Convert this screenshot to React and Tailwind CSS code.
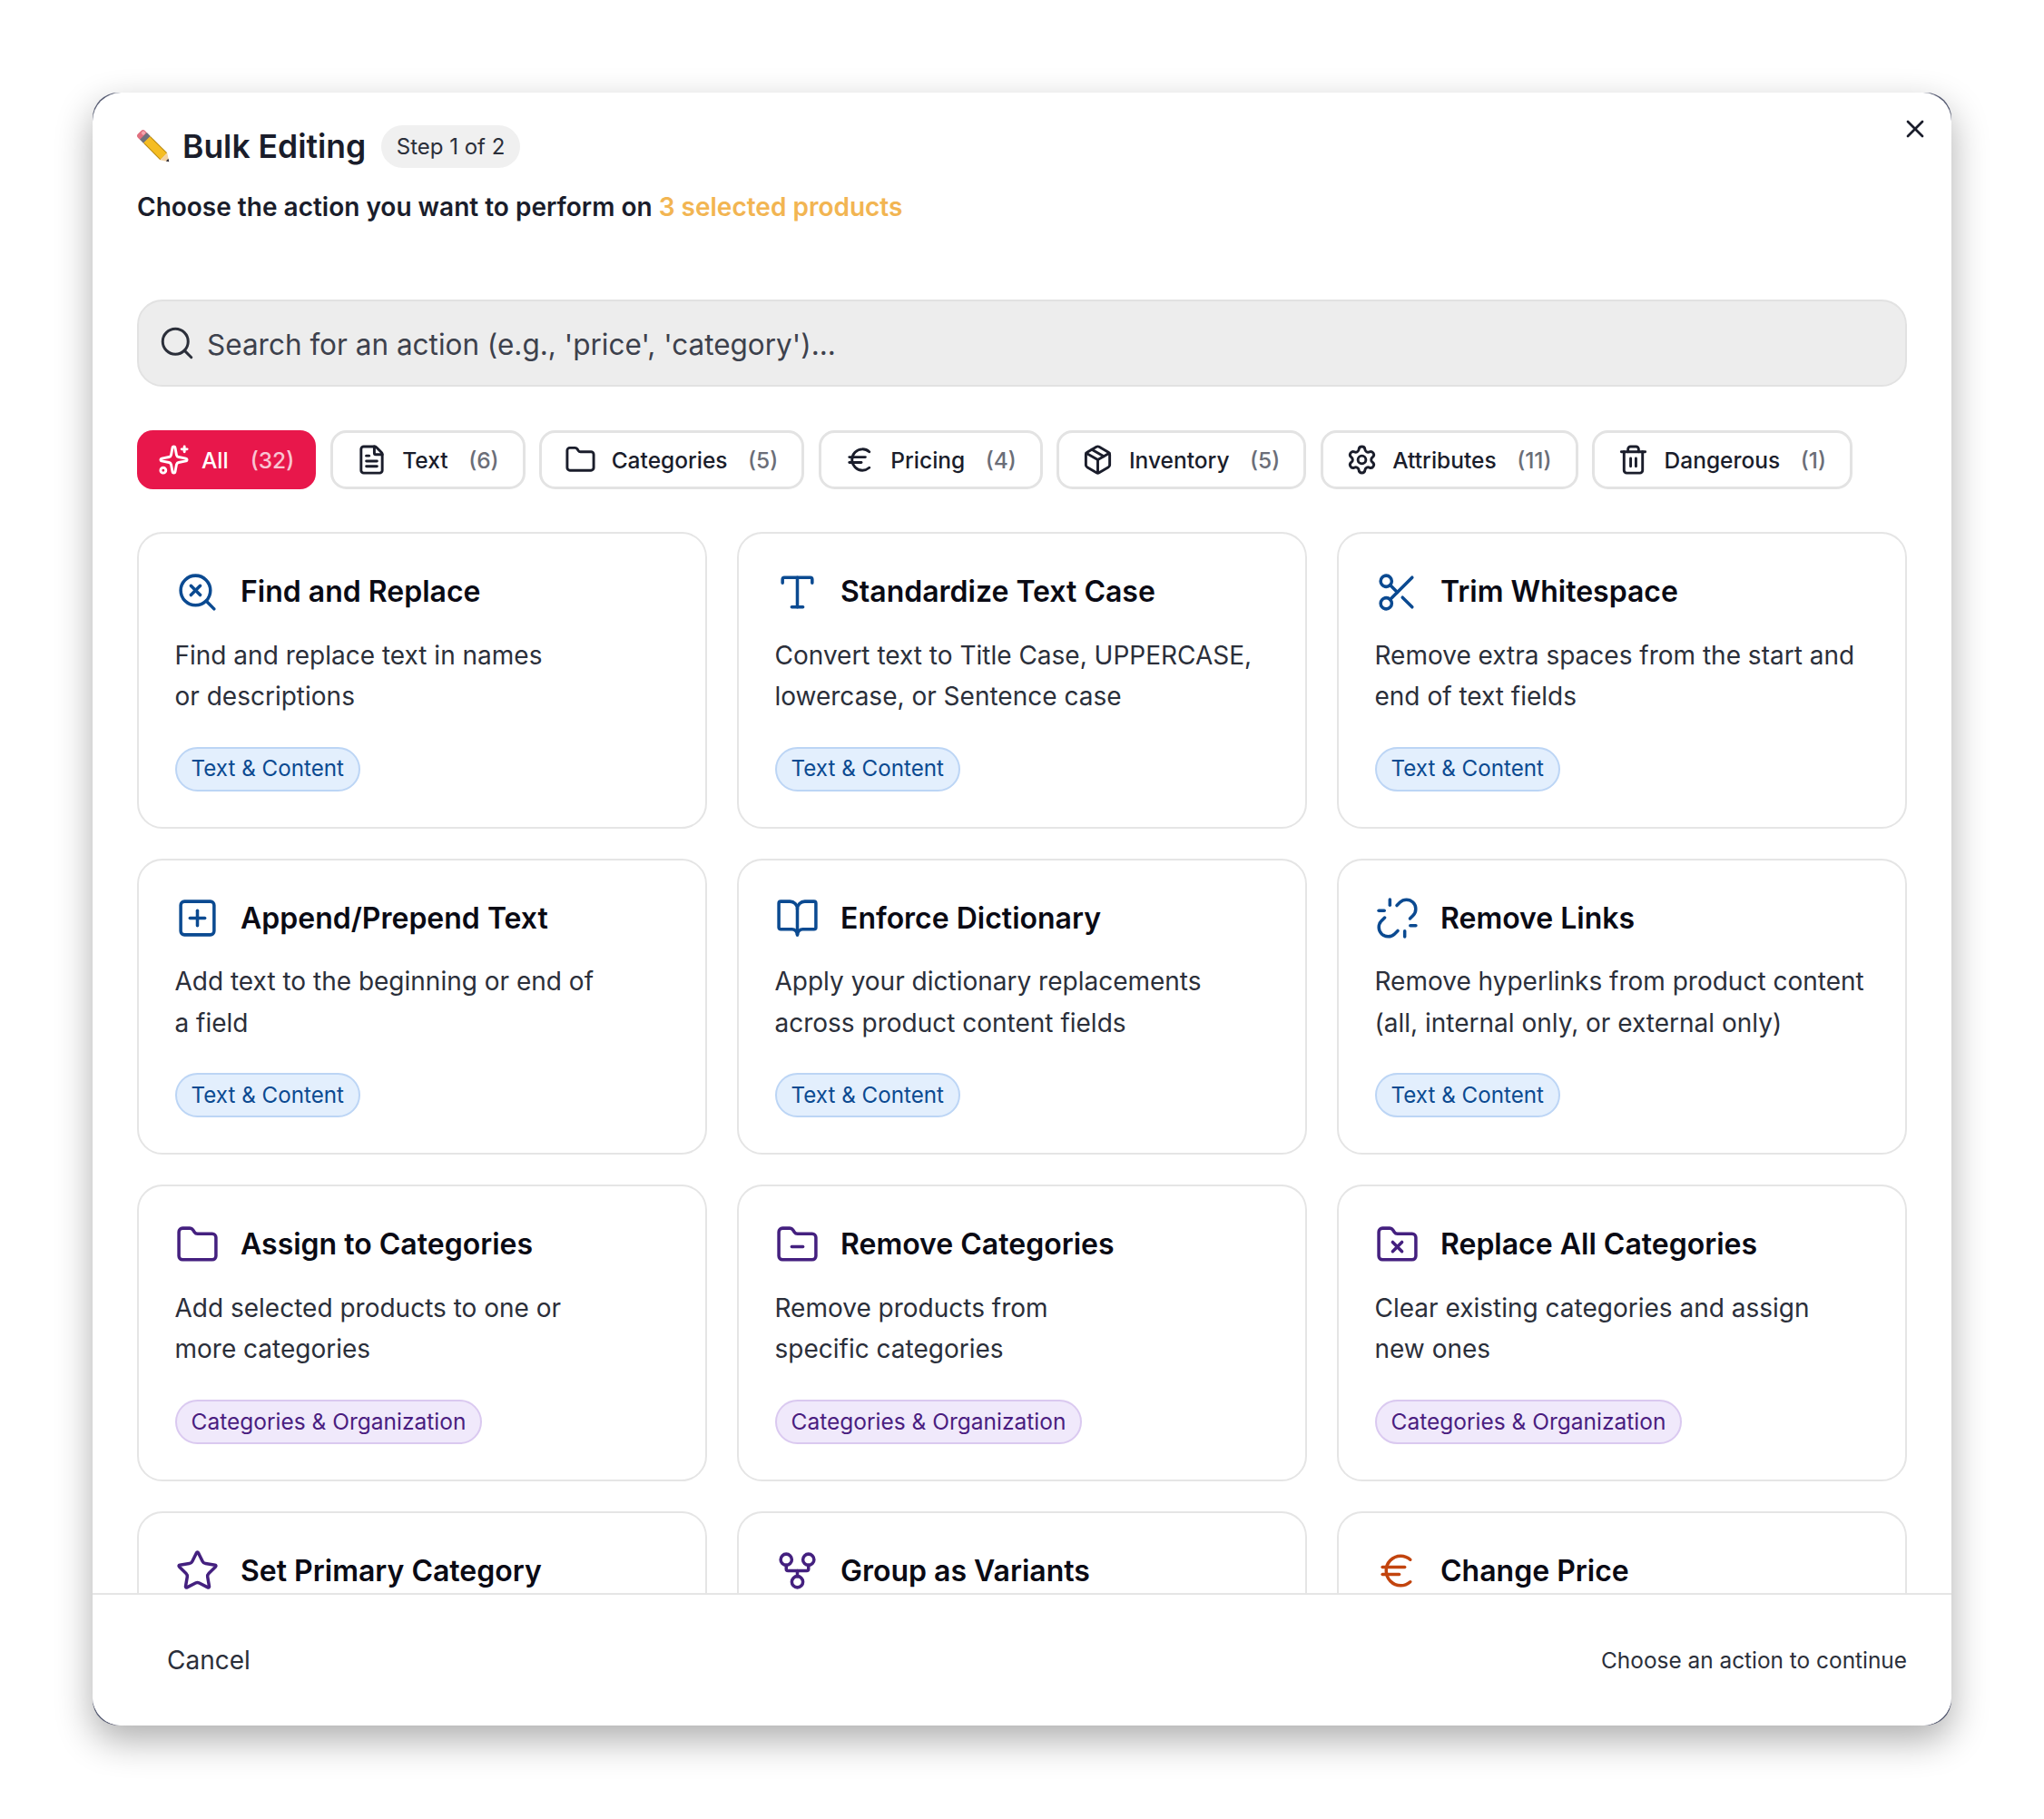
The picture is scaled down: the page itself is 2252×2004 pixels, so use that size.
import React from "react";
import { Sparkles, FileText, Folder, Euro, Package, Settings, Trash2, Search, SearchX, Type, Scissors, SquarePlus, BookOpen, Unlink, FolderMinus, FolderX, Star, GitFork, X } from "lucide-react";

const tabs = [
  { icon: FileText, label: "Text", count: 6 },
  { icon: Folder, label: "Categories", count: 5 },
  { icon: Euro, label: "Pricing", count: 4 },
  { icon: Package, label: "Inventory", count: 5 },
  { icon: Settings, label: "Attributes", count: 11 },
  { icon: Trash2, label: "Dangerous", count: 1 },
];

const cards = [
  { icon: SearchX, t: "Find and Replace", d: ["Find and replace text in names", "or descriptions"], k: "blue" },
  { icon: Type, t: "Standardize Text Case", d: ["Convert text to Title Case, UPPERCASE,", "lowercase, or Sentence case"], k: "blue" },
  { icon: Scissors, t: "Trim Whitespace", d: ["Remove extra spaces from the start and", "end of text fields"], k: "blue" },
  { icon: SquarePlus, t: "Append/Prepend Text", d: ["Add text to the beginning or end of", "a field"], k: "blue" },
  { icon: BookOpen, t: "Enforce Dictionary", d: ["Apply your dictionary replacements", "across product content fields"], k: "blue" },
  { icon: Unlink, t: "Remove Links", d: ["Remove hyperlinks from product content", "(all, internal only, or external only)"], k: "blue" },
  { icon: Folder, t: "Assign to Categories", d: ["Add selected products to one or", "more categories"], k: "purple" },
  { icon: FolderMinus, t: "Remove Categories", d: ["Remove products from", "specific categories"], k: "purple" },
  { icon: FolderX, t: "Replace All Categories", d: ["Clear existing categories and assign", "new ones"], k: "purple" },
  { icon: Star, t: "Set Primary Category", k: "purple" },
  { icon: GitFork, t: "Group as Variants", k: "purple" },
  { icon: Euro, t: "Change Price", k: "orange" },
];

const iconColor = { blue: "text-[#0b4a91]", purple: "text-[#44207f]", orange: "text-[#c2440e]" };

function Pencil() {
  return (
    <svg viewBox="0 0 36 36" className="ml-[1.4px] w-[36px] h-[36px] shrink-0 overflow-visible">
      <g transform="rotate(45 18 18)">
        <rect x="-5" y="12.5" width="8" height="11" rx="3" fill="#e0707f" />
        <rect x="-3.5" y="13.5" width="4" height="4" rx="1.5" fill="#f2a6ae" />
        <rect x="1" y="12.5" width="5.5" height="11" fill="#6f717c" />
        <rect x="6.5" y="12.5" width="26" height="11" fill="#b98a14" />
        <rect x="6.5" y="13.5" width="26" height="9" fill="#f5bd22" />
        <polygon points="32.5,12.5 41,18 32.5,23.5" fill="#f3d2a2" />
        <polygon points="38,16.1 41,18 38,19.9" fill="#2a2a3a" />
      </g>
    </svg>
  );
}

function Tab({ icon: Icon, label, count }) {
  return (
    <div className="flex items-center h-[65px] rounded-[17.5px] border-[3.5px] border-[#e3e3e3] bg-white pl-[25px] pr-[26px]">
      <Icon className="w-[35px] h-[35px] text-[#1a1d2b] shrink-0" strokeWidth={2} />
      <span className="ml-[16.5px] text-[24.5px] font-medium text-[#1a1d2b] leading-none">{label}</span>
      <span className="ml-[22.5px] text-[24.5px] font-medium text-[#6b6e78] leading-none">({count})</span>
    </div>
  );
}

function Card({ icon: Icon, t, d, k }) {
  return (
    <div className="rounded-[28px] border-[2px] border-[#e5e5e5] bg-white p-[39.5px] h-[326.5px]">
      <div className="flex items-center h-[49px]">
        <Icon className={`w-[49px] h-[49px] shrink-0 ${iconColor[k]}`} strokeWidth={1.72} />
        <h3 className="ml-[23.5px] text-[32px] font-semibold text-[#0a0a14] leading-none whitespace-nowrap">{t}</h3>
      </div>
      {d && (
        <>
          <p className="mt-[23px] text-[28px] leading-[45.5px] whitespace-nowrap text-[#2b2f3a]">
            {d[0]}
            <br />
            {d[1]}
          </p>
          <div className="mt-[32px] flex">
            {k === "blue" ? (
              <span className="flex items-center h-[49px] px-[16px] rounded-full border-[2px] border-[#bcd5f5] bg-[#e3effd] text-[24.2px] text-[#0b4a91] leading-none">
                Text &amp; Content
              </span>
            ) : (
              <span className="flex items-center h-[49px] px-[16px] rounded-full border-[2px] border-[#dac9f0] bg-[#f0e9fb] text-[24.5px] text-[#4a1d80] leading-none">
                Categories &amp; Organization
              </span>
            )}
          </div>
        </>
      )}
    </div>
  );
}

export default function App() {
  return (
    <div className="w-[2252px] h-[2004px] bg-white pt-[102px] pl-[102px] font-['Inter',sans-serif]">
      <div className="relative w-[2048px] h-[1799px] rounded-[28px] bg-[#565b72] shadow-[0_16px_40px_rgba(0,0,0,0.32)]">
        <div className="flex flex-col w-full h-full rounded-[31.5px] bg-white overflow-hidden">
          <button className="absolute top-[20px] right-[20px] p-[4px] text-[#1a1d2b]">
            <X className="w-[32px] h-[32px]" strokeWidth={2} />
          </button>
          <div className="flex-1 min-h-0 overflow-hidden px-[49px] pt-[36.4px]">
            <div className="flex items-center h-[47px]">
              <Pencil />
              <h2 className="ml-[12.6px] text-[35.5px] font-semibold text-[#1a1d2b] leading-none">Bulk Editing</h2>
              <span className="ml-[17px] flex items-center h-[47px] px-[16.5px] rounded-full bg-[#f0f0f0] text-[24px] text-[#2b2f3a] leading-none">
                Step 1 of 2
              </span>
            </div>
            <p className="mt-[21.5px] text-[28px] leading-[43px] font-semibold text-[#1a1d2b]">
              Choose the action you want to perform on <span className="text-[#f2b552]">3 selected products</span>
            </p>
            <div className="mt-[80.4px] flex items-center h-[96px] rounded-[28px] border-[2px] border-[#e2e2e2] bg-[#ededed] pl-[21px]">
              <Search className="w-[42px] h-[42px] text-[#2b2f3a] shrink-0" strokeWidth={1.72} />
              <span className="ml-[12px] pt-[3px] text-[31.5px] text-[#3d414c] leading-none">Search for an action (e.g., 'price', 'category')...</span>
            </div>
            <div className="mt-[48px] flex gap-[15.5px]">
              <div className="flex items-center h-[65px] rounded-[17.5px] bg-[#e8174b] pl-[23px] pr-[24px] text-white">
                <Sparkles className="w-[35px] h-[35px] shrink-0" strokeWidth={2} />
                <span className="ml-[13px] text-[24.5px] font-medium leading-none">All</span>
                <span className="ml-[24px] text-[24.5px] font-medium leading-none text-white/75">(32)</span>
              </div>
              {tabs.map((x) => (
                <Tab key={x.label} {...x} />
              ))}
            </div>
            <div className="mt-[47px] grid grid-cols-3 gap-x-[33px] gap-y-[33px]">
              {cards.map((c) => (
                <Card key={c.t} {...c} />
              ))}
            </div>
          </div>
          <div className="flex items-center justify-between h-[146px] shrink-0 border-t-[2px] border-[#e5e5e5] bg-white pl-[82px] pr-[49px]">
            <span className="text-[28px] text-[#2b2f3a] leading-none">Cancel</span>
            <span className="text-[24.4px] text-[#2b2f3a] leading-none">Choose an action to continue</span>
          </div>
        </div>
      </div>
    </div>
  );
}
